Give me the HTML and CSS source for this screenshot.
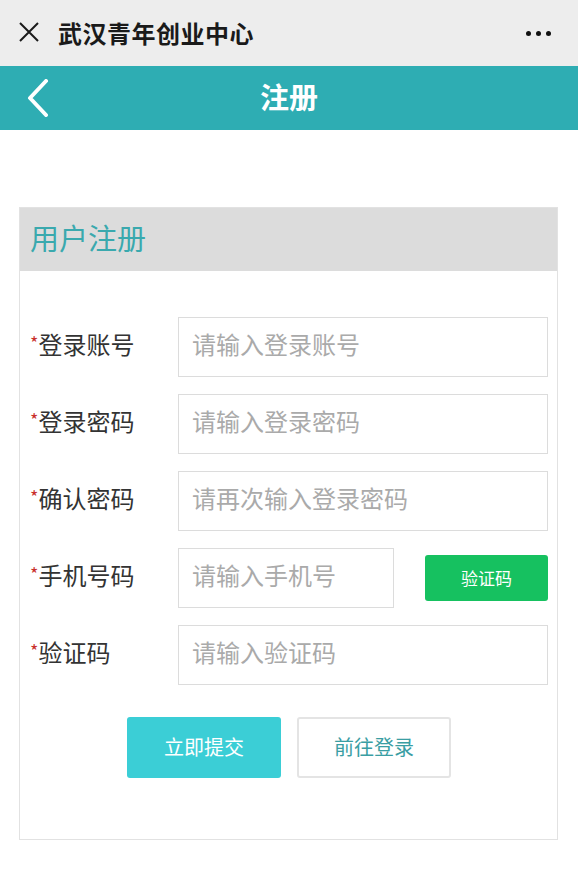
FILE: index.html
```html
<!DOCTYPE html>
<html lang="zh">
<head>
<meta charset="utf-8">
<title>注册</title>
<link rel="stylesheet" href="styles.css">
</head>
<body>
<div class="topbar">
  <svg class="close" width="20" height="20" viewBox="0 0 20 20"><path d="M1 1 L19 19 M19 1 L1 19" stroke="#1a1a1a" stroke-width="2" fill="none"/></svg>
  <span class="app-title">武汉青年创业中心</span>
  <span class="dots"><i></i><i></i><i></i></span>
</div>
<div class="navbar">
  <svg class="back" width="22" height="38" viewBox="0 0 22 38"><path d="M19 2 L3 19 L19 36" stroke="#fff" stroke-width="4" stroke-linecap="round" stroke-linejoin="round" fill="none"/></svg>
  <span class="nav-title">注册</span>
</div>
<div class="main">
  <div class="card">
    <div class="card-head">用户注册</div>
    <div class="card-body">
      <div class="row"><label class="lbl"><em>*</em>登录账号</label><input class="inp" placeholder="请输入登录账号"></div>
      <div class="row"><label class="lbl"><em>*</em>登录密码</label><input class="inp" type="password" placeholder="请输入登录密码"></div>
      <div class="row"><label class="lbl"><em>*</em>确认密码</label><input class="inp" type="password" placeholder="请再次输入登录密码"></div>
      <div class="row"><label class="lbl"><em>*</em>手机号码</label><input class="inp inp-short" placeholder="请输入手机号"><button class="code-btn">验证码</button></div>
      <div class="row"><label class="lbl"><em>*</em>验证码</label><input class="inp" placeholder="请输入验证码"></div>
      <div class="actions">
        <button class="btn btn-primary">立即提交</button>
        <button class="btn btn-default">前往登录</button>
      </div>
    </div>
  </div>
</div>
</body>
</html>
```
FILE: styles.css
```css
* { box-sizing: border-box; }
html, body { margin: 0; padding: 0; background: #fff; }
body {
  width: 578px;
  font-family: "Noto Sans CJK SC", "Noto Sans", sans-serif;
  color: #333;
}
.topbar {
  height: 66px;
  background: #ededed;
  display: flex;
  align-items: center;
  padding: 0 27px 0 19px;
}
.close { display: block; margin-right: 19px; margin-top: -2px; }
.app-title {
  font-size: 24px;
  font-weight: 700;
  color: #1a1a1a;
  letter-spacing: 0.5px;
  flex: 1;
  padding-bottom: 2px;
}
.dots { display: flex; gap: 5px; }
.dots i { width: 5px; height: 5px; border-radius: 50%; background: #111; display: block; }
.navbar {
  height: 64px;
  background: #2eadb3;
  display: flex;
  align-items: center;
  position: relative;
  padding-left: 27px;
}
.back { display: block; }
.nav-title {
  position: absolute;
  left: 0; right: 0;
  text-align: center;
  color: #fff;
  font-size: 29px;
  font-weight: 700;
  pointer-events: none;
  padding-bottom: 4px;
}
.main { padding: 77px 20px 0 19px; }
.card { border: 1px solid #e2e2e2; }
.card-head {
  height: 63px;
  background: #dcdcdc;
  color: #3aa9ae;
  font-size: 29px;
  display: flex;
  align-items: center;
  padding: 0 0 5px 10px;
}
.card-body { padding: 46px 9px 61px 10px; }
.row {
  display: flex;
  align-items: center;
  height: 60px;
  margin-bottom: 17px;
}
.lbl {
  width: 148px;
  font-size: 24px;
  color: #333;
  padding-bottom: 7px;
}
.lbl em { font-style: normal; color: #c9302c; font-size: 18px; vertical-align: 4px; }
.inp {
  width: 370px;
  height: 60px;
  border: 1px solid #dcdcdc;
  padding: 0 0 7px 13px;
  font-family: inherit;
  font-size: 24px;
  color: #333;
  outline: none;
  background: #fff;
}
.inp::placeholder { color: #aaa; }
.inp-short { width: 216px; }
.code-btn {
  margin-left: auto;
  width: 123px;
  height: 46px;
  border: none;
  border-radius: 3px;
  background: #16c160;
  color: #fff;
  font-family: inherit;
  font-size: 17px;
  padding-bottom: 3px;
}
.actions {
  display: flex;
  justify-content: center;
  gap: 16px;
  padding-top: 15px;
}
.btn {
  width: 154px;
  height: 61px;
  border-radius: 3px;
  font-family: inherit;
  font-size: 20px;
  padding-bottom: 4px;
}
.btn-primary { background: #3bced6; color: #fff; border: none; }
.btn-default { background: #fff; color: #3a9ea3; border: 2px solid #e4e4e4; }
```
